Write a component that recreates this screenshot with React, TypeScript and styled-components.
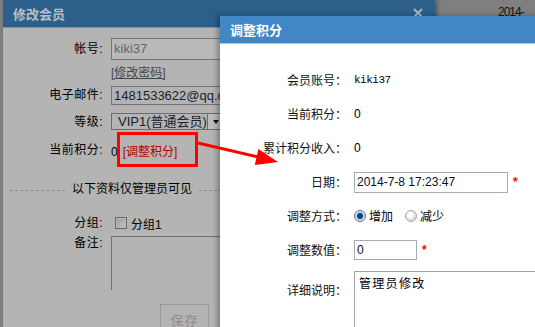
import { createGlobalStyle, styled } from 'styled-components';

const GlobalStyle = createGlobalStyle`
  html, body {
    margin: 0;
    padding: 0;
  }
  body {
    font-family: "Liberation Sans", "Noto Sans CJK SC", sans-serif;
    font-size: 12px;
    color: #000;
  }
`;

const Stage = styled.div`
  position: relative;
  width: 535px;
  height: 327px;
  overflow: hidden;
  background: #7f7f7f;
`;

const BackDate = styled.div`
  position: absolute;
  left: 498px;
  top: 5px;
  font-size: 12px;
  letter-spacing: -1px;
  color: #111;
`;

/* 修改会员 (dimmed, behind) */
const MemberWindow = styled.div`
  position: absolute;
  left: 3px;
  top: 0;
  width: 432px;
  height: 340px;
  background: #b4b4b4;
  box-shadow: 2px 0 4px rgba(0, 0, 0, 0.35);
  display: flex;
  flex-direction: column;
`;

const MemberTitle = styled.div`
  position: relative;
  height: 27px;
  line-height: 27px;
  padding-left: 10px;
  background: #2d5f8b;
  border-bottom: 1px solid #7f93a6;
  color: #b9c0c7;
  font-family: "Noto Sans CJK SC", sans-serif;
  font-weight: 700;
  font-size: 13px;
`;

const CloseMark = styled.svg`
  position: absolute;
  right: 12px;
  top: 8px;
`;

const MemberBody = styled.div`
  padding-top: 10px;
  display: flex;
  flex-direction: column;
`;

const FieldRow = styled.div<{ $h: number; $top?: number; $align?: string }>`
  display: flex;
  align-items: ${(p) => p.$align || 'center'};
  gap: 8px;
  height: ${(p) => p.$h}px;
  margin-top: ${(p) => p.$top || 0}px;
`;

const FieldLabel = styled.div`
  width: 100px;
  flex: none;
  text-align: right;
  font-size: 12px;
  letter-spacing: 0.5px;
  line-height: 14px;
`;

const GrayInput = styled.div<{ $w: number; $h: number; $muted?: boolean }>`
  box-sizing: border-box;
  width: ${(p) => p.$w}px;
  height: ${(p) => p.$h}px;
  flex: none;
  border: 1px solid #747474;
  background: ${(p) => (p.$muted ? '#b9b9b9' : '#b3b3b3')};
  padding-left: 2px;
  font-size: 13px;
  line-height: ${(p) => p.$h - 2}px;
  color: ${(p) => (p.$muted ? '#666' : '#1c1c2c')};
  white-space: nowrap;
  overflow: hidden;
`;

const PwdLink = styled.span`
  font-size: 12px;
  color: #474747;
  text-decoration: underline;
`;

const LevelSelect = styled.div`
  box-sizing: border-box;
  width: 114px;
  height: 17px;
  flex: none;
  display: flex;
  border: 1px solid #6c6c6c;
  font-size: 13px;
  line-height: 15px;
  color: #1c1c2c;
`;

const SelectText = styled.div`
  flex: 1;
  padding-left: 6px;
  white-space: nowrap;
`;

const SelectArrow = styled.div`
  width: 16px;
  border-left: 1px solid #6c6c6c;
  background: #bdbdbd;
  display: flex;
  align-items: center;
  justify-content: center;
  &::after {
    content: '';
    border-left: 3px solid transparent;
    border-right: 3px solid transparent;
    border-top: 4px solid #111;
  }
`;

const PlainValue = styled.span`
  font-size: 12px;
`;

const AdjustLink = styled.span`
  margin-left: 5px;
  font-size: 12px;
  color: #b40000;
`;

const Divider = styled.div`
  display: flex;
  align-items: center;
  height: 48px;
`;

const DividerLine = styled.div<{ $w?: number }>`
  ${(p) => (p.$w ? `width: ${p.$w}px; margin-left: 7px;` : 'flex: 1;')}
  border-top: 1px dashed #8a8a8a;
  margin-top: 2px;
`;

const DividerText = styled.div`
  padding: 0 7px;
  font-size: 12px;
  line-height: 14px;
`;

const CheckBox = styled.span`
  box-sizing: border-box;
  width: 12px;
  height: 12px;
  margin-left: 4px;
  border: 1px solid #6a6a6a;
  background: linear-gradient(135deg, #9c9c9c, #c4c4c4);
  box-shadow: inset 0 0 0 1px #b8b8b8;
`;

const CheckText = styled.span`
  margin-left: -4px;
  font-size: 12px;
`;

const Remark = styled.div`
  width: 300px;
  height: 53px;
  border-top: 1px solid #707070;
  border-left: 1px solid #707070;
`;

const SaveButton = styled.div`
  margin: 15px 0 0 157px;
  box-sizing: border-box;
  width: 49px;
  height: 30px;
  border: 1px solid #999;
  text-align: center;
  padding-top: 5px;
  font-size: 13px;
  letter-spacing: 1px;
  color: #8d8d8d;
`;

/* 调整积分 (front) */
const PointsWindow = styled.div`
  position: absolute;
  left: 220px;
  top: 16px;
  width: 330px;
  height: 330px;
  background: #fff;
  box-shadow: -3px 0 5px rgba(0, 0, 0, 0.3);
  display: flex;
  flex-direction: column;
`;

const PointsTitle = styled.div`
  height: 27px;
  line-height: 27px;
  padding-left: 10px;
  background: #4187c6;
  border-bottom: 1px solid #a8c3dc;
  color: #fff;
  font-family: "Noto Sans CJK SC", sans-serif;
  font-weight: 700;
  font-size: 13px;
`;

const PointsBody = styled.div`
  padding-top: 19px;
  display: flex;
  flex-direction: column;
`;

const PointRow = styled.div<{ $top?: number; $align?: string }>`
  display: flex;
  align-items: ${(p) => p.$align || 'center'};
  gap: 7px;
  min-height: 34px;
  margin-top: ${(p) => p.$top || 0}px;
`;

const PointLabel = styled.div<{ $pad?: number }>`
  width: 127px;
  flex: none;
  text-align: right;
  font-family: "Noto Sans CJK SC", sans-serif;
  font-size: 12px;
  line-height: 14px;
  color: #111;
  padding-top: ${(p) => p.$pad || 0}px;
`;

const MonoValue = styled.span`
  font-family: "Liberation Mono", monospace;
  font-size: 11px;
  letter-spacing: -0.5px;
`;

const FieldBox = styled.div<{ $w: number; $h: number }>`
  box-sizing: border-box;
  width: ${(p) => p.$w}px;
  height: ${(p) => p.$h}px;
  border: 1px solid #a5acb5;
  padding-left: 2px;
  font-size: 12px;
  line-height: ${(p) => p.$h - 2}px;
  color: #0d0d1a;
`;

const Required = styled.span`
  margin-left: -2px;
  color: #f00;
  font-size: 12px;
  font-weight: 700;
`;

const RadioGroup = styled.div`
  display: flex;
  align-items: center;
`;

const Radio = styled.span<{ $checked?: boolean }>`
  box-sizing: border-box;
  width: 12px;
  height: 12px;
  border-radius: 50%;
  border: 1px solid ${(p) => (p.$checked ? '#4f6f95' : '#a7a7a7')};
  background: ${(p) =>
    p.$checked
      ? 'radial-gradient(circle, #123f7c 0 2.2px, #3f78bd 2.8px, #cfdcec 4px, #f4f4f4 5px)'
      : 'radial-gradient(circle at 40% 40%, #ffffff 0 2px, #dedede 5px)'};
`;

const RadioText = styled.span<{ $gap?: number }>`
  margin: 0 ${(p) => p.$gap || 0}px 0 3px;
  font-family: "Noto Sans CJK SC", sans-serif;
  font-size: 12px;
  line-height: 14px;
`;

const NoteBox = styled.div`
  box-sizing: border-box;
  width: 200px;
  height: 58px;
  border: 1px solid #a3a3a3;
  padding: 3px 0 0 4px;
  font-family: "Noto Sans CJK SC", sans-serif;
  font-size: 12px;
  letter-spacing: 1.3px;
  line-height: 16px;
`;

const Annotation = styled.svg`
  position: absolute;
  left: 0;
  top: 0;
  pointer-events: none;
`;

export default function App() {
  return (
    <>
      <GlobalStyle />
      <Stage>
        <BackDate>2014-07-08</BackDate>

        <MemberWindow>
          <MemberTitle>
            修改会员
            <CloseMark width="10" height="10" viewBox="0 0 10 10">
              <path d="M1 1 L9 9 M9 1 L1 9" stroke="#a9b5c1" strokeWidth="2" />
            </CloseMark>
          </MemberTitle>
          <MemberBody>
            <FieldRow $h={22}>
              <FieldLabel>帐号:</FieldLabel>
              <GrayInput $w={260} $h={22} $muted>
                kiki37
              </GrayInput>
            </FieldRow>
            <FieldRow $h={22}>
              <FieldLabel />
              <PwdLink>[修改密码]</PwdLink>
            </FieldRow>
            <FieldRow $h={26}>
              <FieldLabel>电子邮件:</FieldLabel>
              <GrayInput $w={260} $h={19}>
                1481533622@qq.com
              </GrayInput>
            </FieldRow>
            <FieldRow $h={27}>
              <FieldLabel>等级:</FieldLabel>
              <LevelSelect>
                <SelectText>VIP1(普通会员)</SelectText>
                <SelectArrow />
              </LevelSelect>
            </FieldRow>
            <FieldRow $h={30}>
              <FieldLabel>当前积分:</FieldLabel>
              <PlainValue>
                0<AdjustLink>[调整积分]</AdjustLink>
              </PlainValue>
            </FieldRow>
            <Divider>
              <DividerLine $w={55} />
              <DividerText>以下资料仅管理员可见</DividerText>
              <DividerLine />
            </Divider>
            <FieldRow $h={20}>
              <FieldLabel>分组:</FieldLabel>
              <CheckBox />
              <CheckText>分组1</CheckText>
            </FieldRow>
            <FieldRow $h={53} $top={3} $align="flex-start">
              <FieldLabel>备注:</FieldLabel>
              <Remark />
            </FieldRow>
            <SaveButton>保存</SaveButton>
          </MemberBody>
        </MemberWindow>

        <PointsWindow>
          <PointsTitle>调整积分</PointsTitle>
          <PointsBody>
            <PointRow>
              <PointLabel>会员账号：</PointLabel>
              <MonoValue>kiki37</MonoValue>
            </PointRow>
            <PointRow>
              <PointLabel>当前积分：</PointLabel>
              <PlainValue>0</PlainValue>
            </PointRow>
            <PointRow>
              <PointLabel>累计积分收入：</PointLabel>
              <PlainValue>0</PlainValue>
            </PointRow>
            <PointRow>
              <PointLabel>日期：</PointLabel>
              <FieldBox $w={154} $h={21}>2014-7-8 17:23:47</FieldBox>
              <Required>*</Required>
            </PointRow>
            <PointRow>
              <PointLabel>调整方式：</PointLabel>
              <RadioGroup>
                <Radio $checked />
                <RadioText $gap={12}>增加</RadioText>
                <Radio />
                <RadioText>减少</RadioText>
              </RadioGroup>
            </PointRow>
            <PointRow>
              <PointLabel>调整数值：</PointLabel>
              <FieldBox $w={63} $h={20}>0</FieldBox>
              <Required>*</Required>
            </PointRow>
            <PointRow $top={4} $align="flex-start">
              <PointLabel $pad={12}>详细说明：</PointLabel>
              <NoteBox>管理员修改</NoteBox>
            </PointRow>
          </PointsBody>
        </PointsWindow>

        <Annotation width="535" height="327" viewBox="0 0 535 327">
          <rect x="118.5" y="133.5" width="78" height="32" fill="none" stroke="#ff0000" strokeWidth="3" />
          <line x1="198" y1="143" x2="258" y2="157" stroke="#ff0000" strokeWidth="3" />
          <polygon points="278,162 254.8,165 258.4,149" fill="#ff0000" />
        </Annotation>
      </Stage>
    </>
  );
}
